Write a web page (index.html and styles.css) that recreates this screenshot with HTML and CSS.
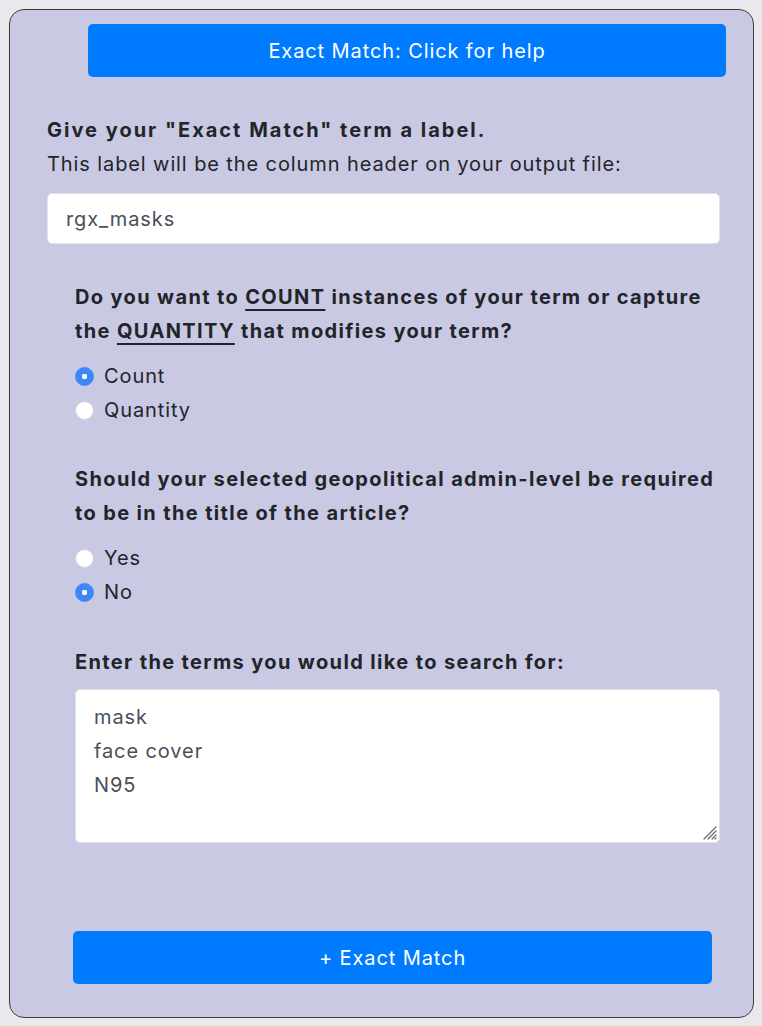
FILE: index.html
```html
<!DOCTYPE html>
<html lang="en">
<head>
<meta charset="utf-8">
<title>Exact Match</title>
<link rel="stylesheet" href="styles.css">
</head>
<body>
<div class="card">
  <button class="btn btn-help" type="button">Exact Match: Click for help</button>
  <div class="form">
    <label class="title" for="lbl">Give your "Exact Match" term a label.</label>
    <p class="hint">This label will be the column header on your output file:</p>
    <input id="lbl" class="field" type="text" value="rgx_masks">

    <div class="group">
      <p class="question">Do you want to <abbr class="ab">COUNT</abbr> instances of your term or capture the <abbr class="ab">QUANTITY</abbr> that modifies your term?</p>
      <div class="options">
        <label class="opt"><input type="radio" name="q1" checked><span>Count</span></label>
        <label class="opt"><input type="radio" name="q1"><span>Quantity</span></label>
      </div>

      <p class="question q2">Should your selected geopolitical admin-level be required to be in the title of the article?</p>
      <div class="options">
        <label class="opt"><input type="radio" name="q2"><span>Yes</span></label>
        <label class="opt"><input type="radio" name="q2" checked><span>No</span></label>
      </div>

      <p class="question q3">Enter the terms you would like to search for:</p>
      <div class="area-wrap">
        <textarea class="area">mask
face cover
N95</textarea>
        <svg class="grip" width="16" height="16" viewBox="0 0 16 16" aria-hidden="true">
          <path d="M15 3 L3 15 M15 7 L7 15 M15 11 L11 15 M15 14 L14 15" stroke="#6b6b6b" stroke-width="1.2" stroke-linecap="round" fill="none"/>
        </svg>
      </div>
    </div>
  </div>
  <button class="btn btn-add" type="button">+ Exact Match</button>
</div>
</body>
</html>
```

FILE: styles.css
```css
* { box-sizing: border-box; }

html, body {
  margin: 0;
  padding: 0;
  background: #e9e9ed;
}

body {
  font-family: "Inter", "Noto Sans", sans-serif;
  font-size: 20px;
  line-height: 34px;
  letter-spacing: 0.9px;
  color: #212529;
  padding: 9px 8px 9px 9px;
}

.card {
  width: 745px;
  height: 1009px;
  background: #c9c9e4;
  border: 1.5px solid #3c3c40;
  border-radius: 15px;
  padding: 14px 0 0 0;
  display: flex;
  flex-direction: column;
}

.btn {
  display: block;
  border: 0;
  background: #007bff;
  color: #fff;
  font-family: inherit;
  font-size: 20px;
  letter-spacing: 0.9px;
  height: 53px;
  border-radius: 5px;
  padding: 0;
  text-align: center;
}

.btn-help {
  margin-left: 78px;
  width: 638px;
}

.btn-add {
  margin-top: 88px;
  margin-left: 63px;
  width: 639px;
}

.form {
  padding-left: 37px;
}

.title {
  display: block;
  margin-top: 36px;
  font-weight: 700;
  letter-spacing: 2px;
}

.hint {
  margin: 0;
}

.field {
  display: block;
  margin-top: 12px;
  width: 673px;
  height: 51px;
  border: 1px solid #e2e2ea;
  border-radius: 5px;
  background: #fff;
  padding: 0 18px;
  font-family: inherit;
  font-size: 20px;
  letter-spacing: 0.9px;
  color: #495057;
  outline: none;
}

.group {
  margin-left: 28px;
  width: 645px;
}

.question {
  margin: 36px 0 0 0;
  font-weight: 700;
  letter-spacing: 1.36px;
}

.q2 { margin-top: 35px; }
.q3 { margin-top: 36px; }

.ab {
  text-decoration: underline;
  text-decoration-thickness: 1.5px;
  text-underline-offset: 5px;
}

.options {
  margin-top: 11px;
  display: flex;
  flex-direction: column;
}

.opt {
  display: flex;
  align-items: center;
  height: 34px;
}

.opt input {
  appearance: none;
  -webkit-appearance: none;
  margin: 0 10px 0 0;
  width: 19px;
  height: 19px;
  border-radius: 50%;
  background: #fff;
  border: 1px solid #d2d2da;
  flex: none;
}

.opt input:checked {
  border-color: #3d87f6;
  background: radial-gradient(circle, #fff 0 2.5px, #3d87f6 3px);
}

.area-wrap {
  position: relative;
  margin-top: 10px;
  width: 645px;
}

.area {
  display: block;
  width: 645px;
  height: 154px;
  border: 1px solid #e2e2ea;
  border-radius: 5px;
  background: #fff;
  padding: 10px 18px;
  font-family: inherit;
  font-size: 20px;
  line-height: 34px;
  letter-spacing: 0.9px;
  color: #495057;
  outline: none;
  resize: none;
}

.grip {
  position: absolute;
  right: 3px;
  bottom: 3px;
}
```
